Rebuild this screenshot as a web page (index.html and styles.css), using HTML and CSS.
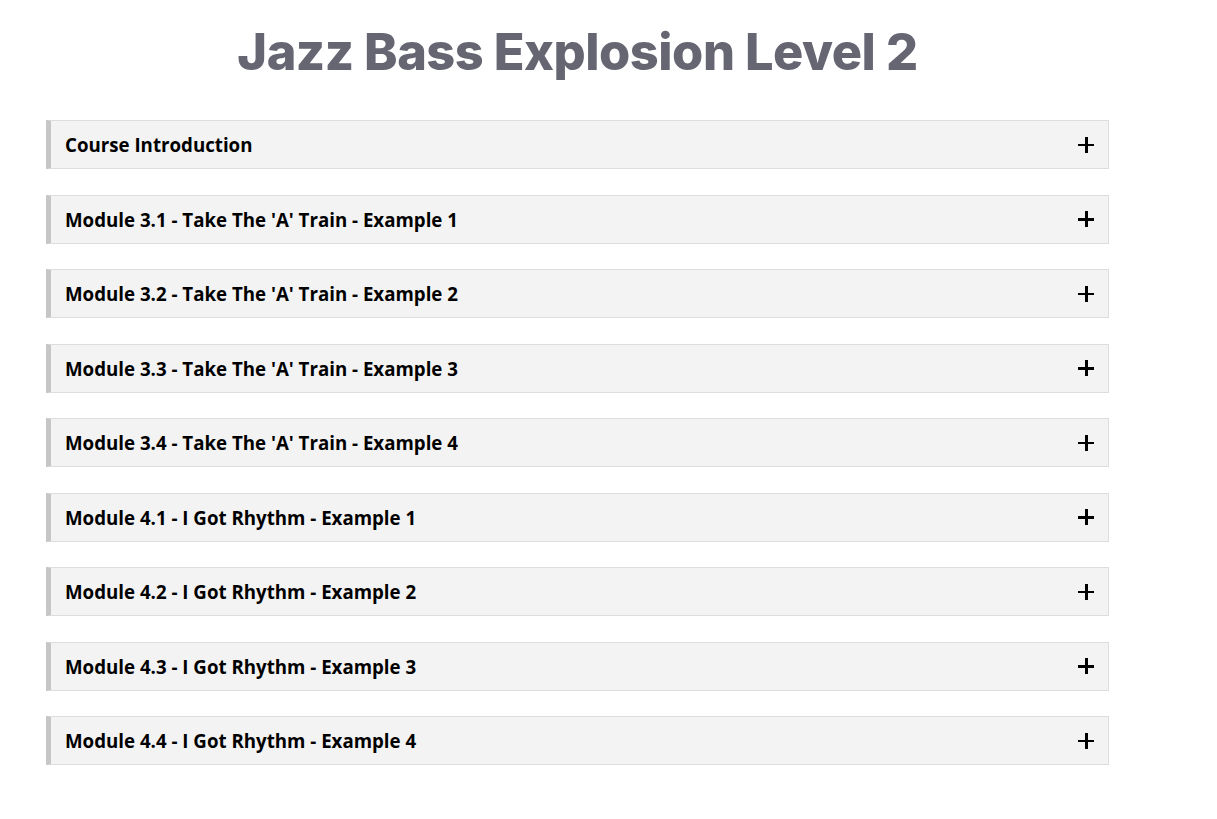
FILE: index.html
```html
<!DOCTYPE html>
<html>

<head>
    <title>Jazz Bass Explosion Level 2</title>
    <link rel="stylesheet" href="styles.css">
</head>

<body>

<div class="course">
    <h1 class="course-title">Jazz Bass Explosion Level 2</h1>

    <div class="accordion">
        <div class="panel"><span class="panel-title">Course Introduction</span><span class="plus"></span></div>
        <div class="panel"><span class="panel-title">Module 3.1 - Take The 'A' Train - Example 1</span><span class="plus"></span></div>
        <div class="panel"><span class="panel-title">Module 3.2 - Take The 'A' Train - Example 2</span><span class="plus"></span></div>
        <div class="panel"><span class="panel-title">Module 3.3 - Take The 'A' Train - Example 3</span><span class="plus"></span></div>
        <div class="panel"><span class="panel-title">Module 3.4 - Take The 'A' Train - Example 4</span><span class="plus"></span></div>
        <div class="panel"><span class="panel-title">Module 4.1 - I Got Rhythm - Example 1</span><span class="plus"></span></div>
        <div class="panel"><span class="panel-title">Module 4.2 - I Got Rhythm - Example 2</span><span class="plus"></span></div>
        <div class="panel"><span class="panel-title">Module 4.3 - I Got Rhythm - Example 3</span><span class="plus"></span></div>
        <div class="panel"><span class="panel-title">Module 4.4 - I Got Rhythm - Example 4</span><span class="plus"></span></div>
    </div> <!-- accordion -->
</div> <!-- course -->

</body>

</html>
```

FILE: styles.css
```css
body {
    margin: 0;
    background-color: #ffffff;
    font-family: "Open Sans", sans-serif;
}

.course {
    width: 1063px;
    margin-left: 46px;
    padding-top: 22px;
}

.course-title {
    margin: 0 0 38px 0;
    text-align: center;
    font-family: Inter, sans-serif;
    font-weight: 800;
    font-size: 50.5px;
    line-height: 60px;
    color: #666673;
    letter-spacing: -0.5px;
}

.accordion {
    display: flex;
    flex-direction: column;
    gap: 25.5px;
}

.panel {
    display: flex;
    align-items: center;
    justify-content: space-between;
    height: 47px;
    padding: 0 14px 0 14px;
    background-color: #f3f3f3;
    border: 1px solid #dddddd;
    border-left: 5px solid #c6c6c6;
}

.panel-title {
    font-size: 18.7px;
    font-weight: 700;
    color: #000000;
}

/* plus icon */
.plus {
    position: relative;
    width: 16px;
    height: 16px;
}
.plus::before,
.plus::after {
    content: "";
    position: absolute;
    background-color: #000000;
}
.plus::before {
    left: 0;
    top: 7px;
    width: 16px;
    height: 2.5px;
}
.plus::after {
    left: 7px;
    top: 0;
    width: 2.5px;
    height: 16px;
}
```
